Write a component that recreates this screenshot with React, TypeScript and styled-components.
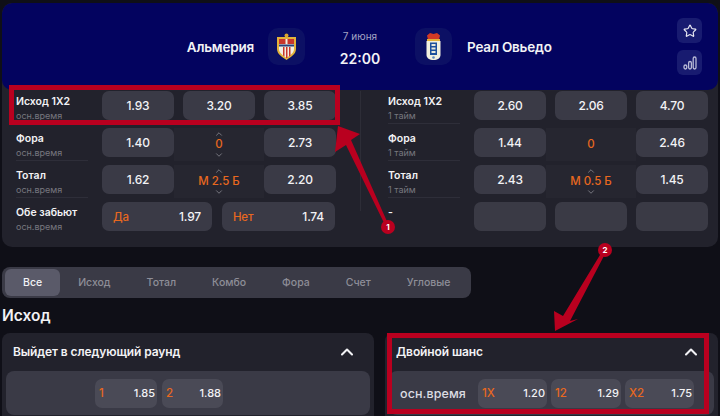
import React from 'react';
import styled, { createGlobalStyle } from 'styled-components';
import { ChevronDown, ChevronUp, Star } from 'lucide-react';

const GlobalStyle = createGlobalStyle`
  html, body {
    margin: 0;
    padding: 0;
    background: #0f0f17;
  }
  * {
    box-sizing: border-box;
  }
`;

const Page = styled.div`
  position: relative;
  width: 720px;
  height: 416px;
  padding: 3px 2px 0;
  overflow: hidden;
  background: #0f0f17;
  color: #f2f2f5;
  font-family: 'Inter', 'Liberation Sans', sans-serif;
`;

const MatchCard = styled.section`
  height: 244px;
  background: #22222c;
  border-radius: 10px;
  overflow: hidden;
`;

const Header = styled.header`
  height: 87px;
  display: grid;
  grid-template-columns: 1fr 110px 1fr;
  align-items: center;
  background: #03035f;
  border-radius: 10px;
`;

const TeamLeft = styled.div`
  display: flex;
  justify-content: flex-end;
  align-items: center;
  gap: 14px;
`;

const TeamRight = styled.div`
  display: flex;
  align-items: center;
  gap: 15px;
  padding-right: 16px;
`;

const TeamName = styled.span`
  font-size: 13.5px;
  font-weight: 600;
  letter-spacing: -0.2px;
`;

const CrestBox = styled.div`
  width: 37px;
  height: 37px;
  display: flex;
  align-items: center;
  justify-content: center;
  background: #0c1064;
  border-radius: 10px;
`;

const Kickoff = styled.div`
  display: flex;
  flex-direction: column;
  align-items: center;
  gap: 8px;
  padding-top: 3px;
`;

const KickoffDate = styled.span`
  font-size: 10px;
  line-height: 12px;
  color: #a3a4c4;
`;

const KickoffTime = styled.span`
  font-size: 14px;
  line-height: 17px;
  font-weight: 600;
`;

const Actions = styled.div`
  margin-left: auto;
  display: flex;
  flex-direction: column;
  gap: 7px;
`;

const ActionButton = styled.button`
  width: 25px;
  height: 25px;
  padding: 0;
  display: flex;
  align-items: center;
  justify-content: center;
  border: 0;
  border-radius: 6px;
  background: #181b70;
  color: #e8e8f2;
`;

const Columns = styled.div`
  display: grid;
  grid-template-columns: 358px 358px;
  padding-top: 1px;
`;

const Column = styled.div<{ $inset: number; $divided?: boolean }>`
  display: flex;
  flex-direction: column;
  gap: 8px;
  height: 120px;
  padding-left: ${(p) => p.$inset}px;
  ${(p) => p.$divided && 'box-shadow: 1px 0 0 #2d2d37;'}
`;

const Row = styled.div`
  display: grid;
  grid-template-columns: 77px repeat(3, 72px);
  column-gap: 9px;
  height: 29px;
  flex: none;
`;

const Label = styled.div<{ $line?: boolean }>`
  margin-right: 5px;
  height: 35px;
  margin-top: -2px;
  padding-top: 6px;
  ${(p) => p.$line && 'border-bottom: 1px solid #2e2e39;'}
`;

const LabelTitle = styled.div`
  font-size: 10.5px;
  font-weight: 600;
  line-height: 13px;
`;

const LabelSub = styled.div`
  margin-top: 2px;
  font-size: 9px;
  line-height: 12px;
  color: #77777f;
`;

const Odd = styled.button`
  height: 29px;
  padding: 0;
  border: 0;
  border-radius: 7px;
  background: #3a3a46;
  color: #f2f2f5;
  font-family: inherit;
  font-size: 12px;
  font-weight: 500;
  letter-spacing: -0.2px;
`;

const EmptyOdd = styled(Odd)`
  background: #3a3a45;
`;

const Mid = styled.div`
  margin: 0 -9px;
  display: flex;
  flex-direction: column;
  align-items: center;
  justify-content: center;
  color: #85858e;
  background: #262630;
`;

const MidValue = styled.span`
  font-size: 11.5px;
  font-weight: 500;
  line-height: 11px;
  color: #e8681f;
`;

const SplitCell = styled.div`
  grid-column: span 3;
  display: grid;
  grid-template-columns: 110px 113px;
  column-gap: 10px;
`;

const SplitOdd = styled(Odd)`
  padding: 0 11px;
  display: flex;
  align-items: center;
  justify-content: space-between;
`;

const Pick = styled.span`
  color: #e8681f;
  font-size: 11.5px;
`;

const Tabs = styled.nav`
  width: max-content;
  height: 31px;
  margin-top: 20px;
  padding: 2px 3px;
  display: flex;
  background: #3a3a46;
  border-radius: 8px;
`;

const Tab = styled.span<{ $active?: boolean }>`
  display: flex;
  align-items: center;
  padding: 0 18px;
  font-size: 10.5px;
  font-weight: 500;
  border-radius: 6px;
  color: ${(p) => (p.$active ? '#f2f2f5' : '#8e8e98')};
  background: ${(p) => (p.$active ? '#5a5a69' : 'transparent')};
`;

const SectionTitle = styled.h2`
  margin: 0;
  height: 35px;
  display: flex;
  align-items: center;
  font-size: 15.5px;
  font-weight: 600;
`;

const Markets = styled.div`
  display: grid;
  grid-template-columns: 372px 333px;
  column-gap: 11px;
`;

const Market = styled.section`
  height: 90px;
  padding: 0 4px;
  background: #22222c;
  border-radius: 8px;
`;

const MarketHeader = styled.div`
  height: 37px;
  margin-bottom: 1px;
  padding: 0 13px 0 7px;
  display: flex;
  align-items: center;
  justify-content: space-between;
  font-size: 12px;
  font-weight: 600;
  letter-spacing: -0.1px;
`;

const MarketBody = styled.div<{ $indent: number; $gap: number }>`
  height: 44px;
  padding-left: ${(p) => p.$indent}px;
  display: flex;
  align-items: center;
  gap: ${(p) => p.$gap}px;
  background: #3a3a46;
  border-radius: 8px;
`;

const BodyLabel = styled.span`
  width: 74px;
  font-size: 12.5px;
  font-weight: 500;
  letter-spacing: 0.1px;
  color: #dcdce2;
`;

const MarketOdd = styled.div<{ $width: number }>`
  width: ${(p) => p.$width}px;
  height: 29px;
  padding: 0 2px 0 4px;
  display: flex;
  align-items: center;
  justify-content: space-between;
  background: #4a4a56;
  border-radius: 7px;
  font-size: 11px;
  font-weight: 500;
`;

const Overlay = styled.svg`
  position: absolute;
  left: 0;
  top: 0;
  pointer-events: none;
`;

const BadgeText = styled.text`
  fill: #fff;
  font-size: 8px;
  font-weight: 700;
  text-anchor: middle;
`;

function AlmeriaCrest() {
  return (
    <svg width="21" height="28" viewBox="0 0 21 28">
      <path d="M1 4h19v12c0 5-5 8-9.500 11C6 24 1 21 1 16z" fill="#e2b33a" />
      <path d="M3 6h15v10c0 4-4 6.500-7.500 9C7 22.500 3 20 3 16z" fill="#f4efe2" />
      <path d="M3 6h6.500v5H3zM11.500 6H18v5h-6.500z" fill="#c8362c" />
      <path d="M7 14h1.500v9.500L7 22.500zM10 14h1.500v11H10zM13 14h1.500v8.500L13 23.500z" fill="#c8362c" />
      <path d="M3 11.500h15v2H3z" fill="#27407c" />
      <circle cx="10.500" cy="2.500" r="2" fill="#d9a62e" />
    </svg>
  );
}

function OviedoCrest() {
  return (
    <svg width="17" height="29" viewBox="0 0 17 29">
      <path d="M2 3.500 5 1l3.500 1L12 1l3 2.500-1 4H3z" fill="#d23a25" />
      <path d="M2 7h13v2H2z" fill="#e3b13a" />
      <path d="M1.500 9h14v14c0 3-3 5-7 5s-7-2-7-5z" fill="#f2f0df" />
      <path d="M5 10.500h7v12.500H5z" fill="#1d4f9c" />
      <path d="M6.500 12h4v2h-4zM6.500 15.500h4v2h-4zM6.500 19h4v2h-4z" fill="#e8e8dc" />
      <circle cx="8.500" cy="25.500" r="1.300" fill="#5d84bd" />
    </svg>
  );
}

function BarsIcon() {
  return (
    <svg width="14" height="14" viewBox="0 0 14 14" fill="none" stroke="#b9bbd6" strokeWidth="1.3">
      <rect x="1" y="9" width="2.800" height="4" rx="1.400" />
      <rect x="5.600" y="5.500" width="2.800" height="7.500" rx="1.400" />
      <rect x="10.200" y="1" width="2.800" height="12" rx="1.400" />
    </svg>
  );
}

function MidCell({ value, up = true, down = true }: { value: string; up?: boolean; down?: boolean }) {
  return (
    <Mid>
      {up && <ChevronUp size={10} />}
      <MidValue>{value}</MidValue>
      {down && <ChevronDown size={10} />}
    </Mid>
  );
}

function RowLabel({ title, sub, line = true }: { title: string; sub?: string; line?: boolean }) {
  return (
    <Label $line={line}>
      <LabelTitle>{title}</LabelTitle>
      {sub && <LabelSub>{sub}</LabelSub>}
    </Label>
  );
}

const tabs = ['Все', 'Исход', 'Тотал', 'Комбо', 'Фора', 'Счет', 'Угловые'];

function Annotations() {
  return (
    <Overlay width="720" height="416" viewBox="0 0 720 416">
      <g fill="none" stroke="#b9001f" strokeWidth="5">
        <rect x="11.500" y="87.500" width="326" height="35" />
        <rect x="389.500" y="335.500" width="317" height="76" />
      </g>
      <g fill="#b9001f">
        <path d="M338 126 360 134 351 140 389 226 386 227 346 145 335 152z" />
        <path d="M555 331 554 311 563 316 603 250 606 252 570 321 578 319z" />
        <circle cx="388" cy="227" r="7" />
        <circle cx="605" cy="250" r="7" />
      </g>
      <BadgeText x="388" y="230">1</BadgeText>
      <BadgeText x="605" y="253">2</BadgeText>
    </Overlay>
  );
}

function App() {
  return (
    <Page>
      <GlobalStyle />
      <MatchCard>
        <Header>
          <TeamLeft>
            <TeamName>Альмерия</TeamName>
            <CrestBox>
              <AlmeriaCrest />
            </CrestBox>
          </TeamLeft>
          <Kickoff>
            <KickoffDate>7 июня</KickoffDate>
            <KickoffTime>22:00</KickoffTime>
          </Kickoff>
          <TeamRight>
            <CrestBox>
              <OviedoCrest />
            </CrestBox>
            <TeamName>Реал Овьедо</TeamName>
            <Actions>
              <ActionButton>
                <Star size={14} />
              </ActionButton>
              <ActionButton>
                <BarsIcon />
              </ActionButton>
            </Actions>
          </TeamRight>
        </Header>
        <Columns>
          <Column $inset={14} $divided>
            <Row>
              <RowLabel title="Исход 1X2" sub="осн.время" line={false} />
              <Odd>1.93</Odd>
              <Odd>3.20</Odd>
              <Odd>3.85</Odd>
            </Row>
            <Row>
              <RowLabel title="Фора" sub="осн.время" />
              <Odd>1.40</Odd>
              <MidCell value="0" />
              <Odd>2.73</Odd>
            </Row>
            <Row>
              <RowLabel title="Тотал" sub="осн.время" />
              <Odd>1.62</Odd>
              <MidCell value="М 2.5 Б" />
              <Odd>2.20</Odd>
            </Row>
            <Row>
              <RowLabel title="Обе забьют" sub="осн.время" line={false} />
              <SplitCell>
                <SplitOdd>
                  <Pick>Да</Pick>
                  1.97
                </SplitOdd>
                <SplitOdd>
                  <Pick>Нет</Pick>
                  1.74
                </SplitOdd>
              </SplitCell>
            </Row>
          </Column>
          <Column $inset={28}>
            <Row>
              <RowLabel title="Исход 1X2" sub="1 тайм" />
              <Odd>2.60</Odd>
              <Odd>2.06</Odd>
              <Odd>4.70</Odd>
            </Row>
            <Row>
              <RowLabel title="Фора" sub="1 тайм" />
              <Odd>1.44</Odd>
              <MidCell value="0" up={false} down={false} />
              <Odd>2.46</Odd>
            </Row>
            <Row>
              <RowLabel title="Тотал" sub="1 тайм" />
              <Odd>2.43</Odd>
              <MidCell value="М 0.5 Б" />
              <Odd>1.45</Odd>
            </Row>
            <Row>
              <RowLabel title="-" line={false} />
              <EmptyOdd />
              <EmptyOdd />
              <EmptyOdd />
            </Row>
          </Column>
        </Columns>
      </MatchCard>
      <Tabs>
        {tabs.map((tab, i) => (
          <Tab key={tab} $active={i === 0}>
            {tab}
          </Tab>
        ))}
      </Tabs>
      <SectionTitle>Исход</SectionTitle>
      <Markets>
        <Market>
          <MarketHeader>
            Выйдет в следующий раунд
            <ChevronUp size={20} strokeWidth={2.5} />
          </MarketHeader>
          <MarketBody $indent={89} $gap={5}>
            <MarketOdd $width={62}>
              <Pick>1</Pick>
              1.85
            </MarketOdd>
            <MarketOdd $width={61}>
              <Pick>2</Pick>
              1.88
            </MarketOdd>
          </MarketBody>
        </Market>
        <Market>
          <MarketHeader>
            Двойной шанс
            <ChevronUp size={20} strokeWidth={2.5} />
          </MarketHeader>
          <MarketBody $indent={11} $gap={4}>
            <BodyLabel>осн.время</BodyLabel>
            <MarketOdd $width={69}>
              <Pick>1X</Pick>
              1.20
            </MarketOdd>
            <MarketOdd $width={70}>
              <Pick>12</Pick>
              1.29
            </MarketOdd>
            <MarketOdd $width={69}>
              <Pick>X2</Pick>
              1.75
            </MarketOdd>
          </MarketBody>
        </Market>
      </Markets>
      <Annotations />
    </Page>
  );
}

export default App;
